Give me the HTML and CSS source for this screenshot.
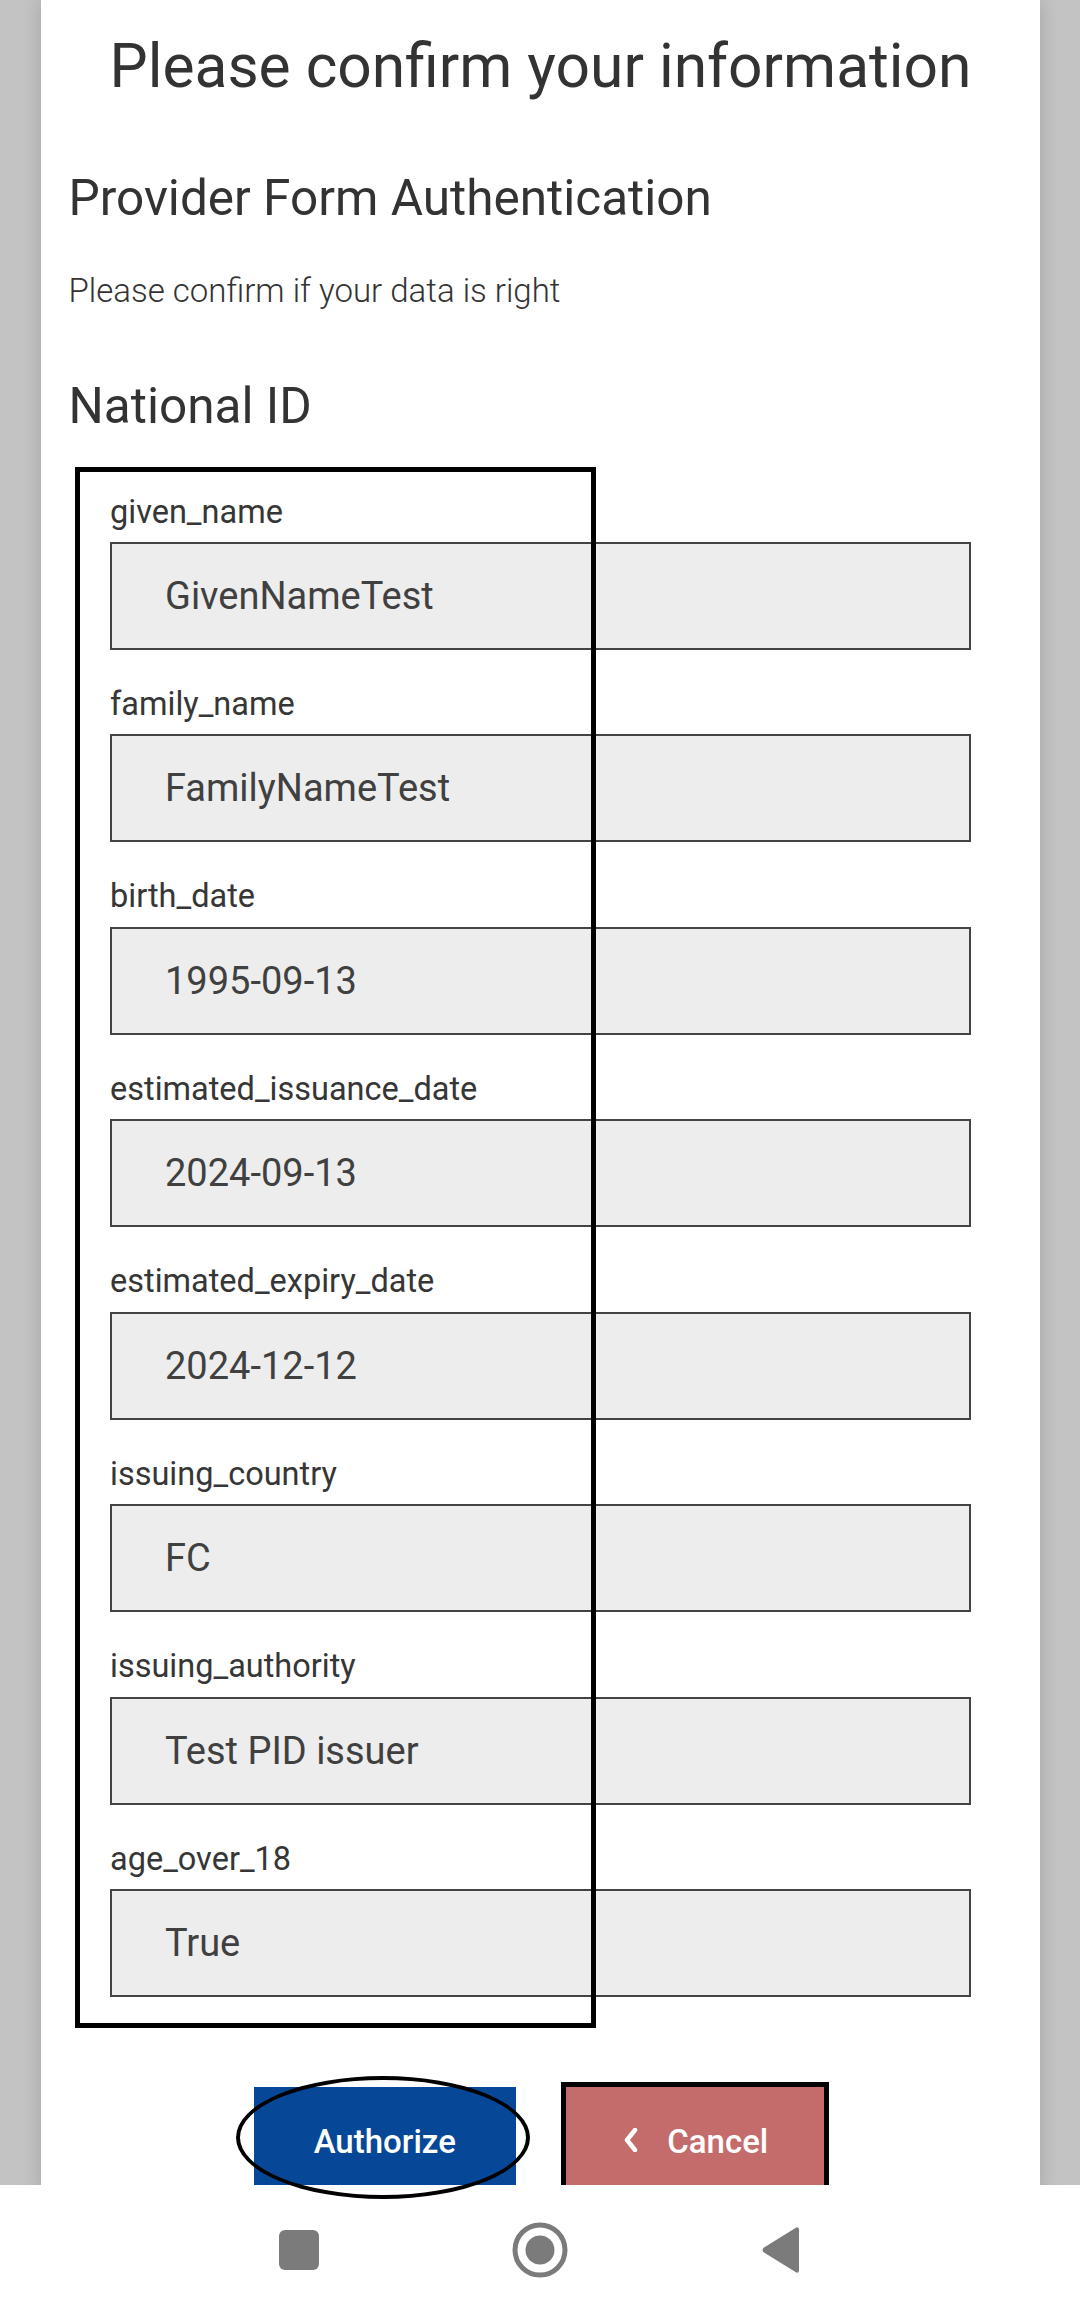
FILE: index.html
```html
<!DOCTYPE html>
<html lang="en">
<head>
<meta charset="utf-8">
<title>Please confirm your information</title>
<link rel="stylesheet" href="styles.css">
</head>
<body>
<div class="screen">
  <div class="viewport">
    <main class="panel">
      <h1 class="title">Please confirm your information</h1>
      <h2 class="subtitle">Provider Form Authentication</h2>
      <p class="hint">Please confirm if your data is right</p>
      <h3 class="section">National ID</h3>
      <div class="fields">
        <div class="field"><label class="label">given_name</label><div class="value">GivenNameTest</div></div>
        <div class="field"><label class="label">family_name</label><div class="value">FamilyNameTest</div></div>
        <div class="field"><label class="label">birth_date</label><div class="value">1995-09-13</div></div>
        <div class="field"><label class="label">estimated_issuance_date</label><div class="value">2024-09-13</div></div>
        <div class="field"><label class="label">estimated_expiry_date</label><div class="value">2024-12-12</div></div>
        <div class="field"><label class="label">issuing_country</label><div class="value">FC</div></div>
        <div class="field"><label class="label">issuing_authority</label><div class="value">Test PID issuer</div></div>
        <div class="field"><label class="label">age_over_18</label><div class="value">True</div></div>
      </div>
      <div class="actions">
        <button class="btn btn-authorize" type="button">Authorize</button>
        <button class="btn btn-cancel" type="button"><svg class="chev" viewBox="0 0 14 24" width="14" height="24"><polyline points="11,2 3,12 11,22" fill="none" stroke="#fff" stroke-width="4.5" stroke-linecap="round" stroke-linejoin="round"/></svg><span>Cancel</span></button>
      </div>
      <div class="mark-rect"></div>
    </main>
  </div>
  <nav class="navbar">
    <div class="nav-slot"><svg class="nav-icon" viewBox="0 0 40 40" width="40" height="40"><rect x="0" y="0" width="40" height="40" rx="6" fill="#7b7b7b"/></svg></div>
    <div class="nav-slot"><svg class="nav-icon" viewBox="0 0 56 56" width="56" height="56"><circle cx="28" cy="28" r="25" fill="none" stroke="#7b7b7b" stroke-width="5"/><circle cx="28" cy="28" r="14.5" fill="#7b7b7b"/></svg></div>
    <div class="nav-slot"><svg class="nav-icon" viewBox="0 0 42 48" width="42" height="48"><path d="M39 4 L39 44 Q39 48 35.5 46 L4 26.5 Q1 24 4 21.5 L35.5 2 Q39 0 39 4 Z" fill="#7b7b7b"/></svg></div>
  </nav>
  <div class="mark-ellipse"></div>
</div>
</body>
</html>
```

FILE: styles.css
```css
* { box-sizing: border-box; }

html, body {
  margin: 0;
  padding: 0;
  background: #ffffff;
}

body {
  font-family: Roboto, "Noto Sans", "Liberation Sans", sans-serif;
  color: #333333;
}

.screen {
  position: relative;
  width: 1080px;
  height: 2317px;
  overflow: hidden;
}

.viewport {
  height: 2185px;
  overflow: hidden;
  background: #c3c3c3;
  padding: 0 40px 0 41px;
}

.panel {
  position: relative;
  background: #ffffff;
  min-height: 2185px;
  padding: 31px 25px 0 27.5px;
  box-shadow: 0 0 18px rgba(0, 0, 0, 0.16);
}

.title {
  margin: 0 0 0 -2.5px;
  font-size: 60.5px;
  line-height: 72px;
  font-weight: 400;
  text-align: center;
  color: #333333;
}

.subtitle {
  margin: 66px 0 0 0;
  font-size: 49.5px;
  line-height: 58px;
  font-weight: 400;
  color: #333333;
}

.hint {
  margin: 43.5px 0 0 0;
  font-size: 33px;
  line-height: 40px;
  font-weight: 300;
  color: #333333;
}

.section {
  margin: 66.5px 0 0 0;
  font-size: 49.5px;
  line-height: 58px;
  font-weight: 400;
  color: #333333;
}

.fields {
  margin: 55.5px 0 0 41.5px;
  width: 861px;
}

.field + .field {
  margin-top: 33.1px;
}

.label {
  display: block;
  font-size: 32.5px;
  line-height: 42px;
  margin-bottom: 9.4px;
  color: #363636;
}

.value {
  height: 108px;
  border: 2px solid #444444;
  background: #ededed;
  display: flex;
  align-items: center;
  padding-left: 53px;
  font-size: 38px;
  color: #404040;
}

.actions {
  margin-top: 90px;
  display: flex;
  justify-content: center;
  gap: 50px;
  padding-right: 6px;
}

.btn {
  height: 108px;
  border: 0;
  font-family: Roboto, "Noto Sans", "Liberation Sans", sans-serif;
  font-size: 33px;
  font-weight: 500;
  color: #ffffff;
  padding: 0;
  display: flex;
  align-items: center;
  justify-content: center;
}

.btn-authorize {
  width: 262px;
  background: #064797;
}

.btn-cancel {
  width: 258px;
  background: #c46c6c;
  outline: 5px solid #000000;
  gap: 29px;
  padding-left: 3px;
}

.chev {
  display: block;
  margin-top: -2px;
}

.mark-rect {
  position: absolute;
  left: 34px;
  top: 467px;
  width: 521px;
  height: 1561px;
  border: 5px solid #000000;
  pointer-events: none;
}

.navbar {
  height: 132px;
  background: #ffffff;
  display: flex;
  align-items: center;
  justify-content: center;
  padding-bottom: 2px;
}

.nav-slot {
  width: 241px;
  display: flex;
  justify-content: center;
  align-items: center;
}

.nav-icon {
  display: block;
}

.mark-ellipse {
  position: absolute;
  left: 236px;
  top: 2076px;
  width: 294px;
  height: 123px;
  border: 4px solid #000000;
  border-radius: 50%;
  pointer-events: none;
}
```
